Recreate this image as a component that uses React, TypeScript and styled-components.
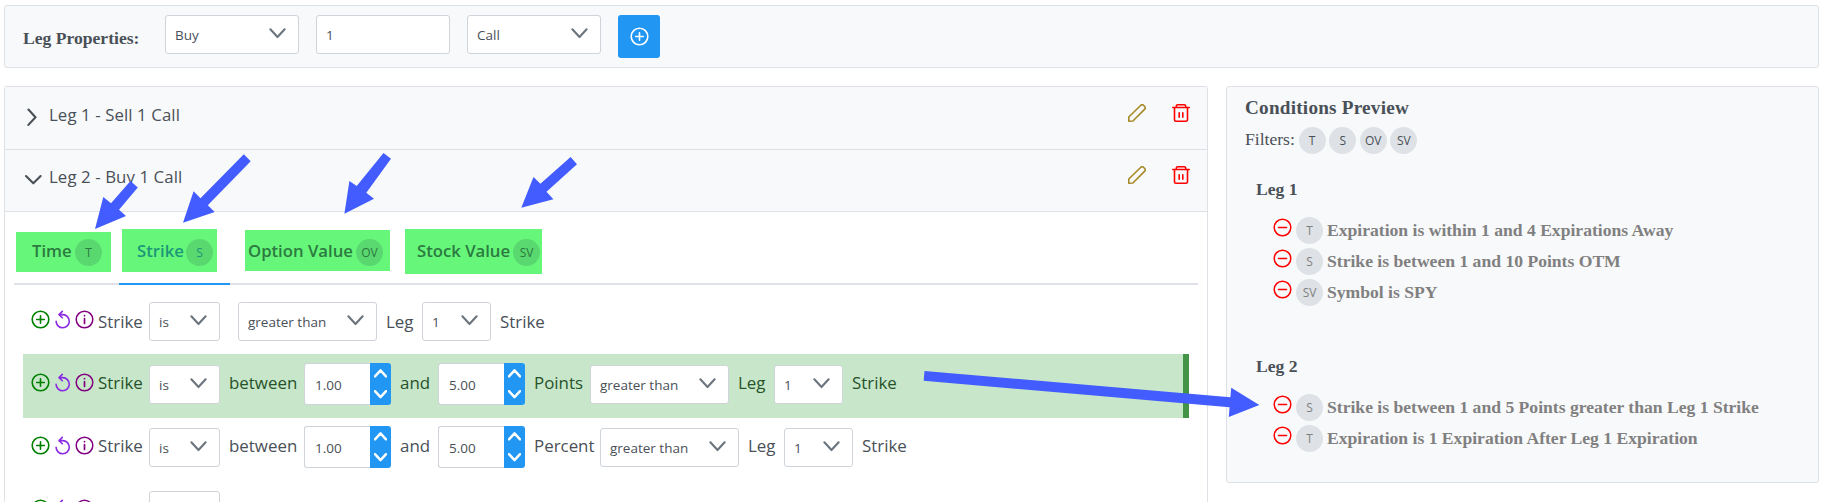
import React from 'react';
import styled, { createGlobalStyle, css } from 'styled-components';

const sans = "'Open Sans', 'Noto Sans', sans-serif";
const serif = "'Liberation Serif', serif";

const GlobalStyle = createGlobalStyle`
  *, *::before, *::after { box-sizing: border-box; }
  html, body { margin: 0; height: 502px; overflow: hidden; }
  body { background: #fff; color: #495057; font-family: ${sans}; }
`;

const Page = styled.div`
  position: relative;
  height: 502px;
  overflow: hidden;
  padding: 5px 19px 0 4px;
  display: flex;
  flex-direction: column;
  gap: 18px;
`;

const panel = css`
  background: #f8f9fa;
  border: 1px solid #dee2e6;
  border-radius: 3px;
`;

const Toolbar = styled.section`
  ${panel}
  flex: none;
  height: 63px;
  display: flex;
  align-items: flex-start;
  gap: 17px;
  padding: 9px 18px;
`;

const ToolbarTitle = styled.strong`
  width: 125px;
  padding-top: 13px;
  font: 700 17.6px/20px ${serif};
  white-space: nowrap;
`;

const Field = styled.div<{ $w: number; $drop?: number }>`
  flex: none;
  width: ${p => p.$w}px;
  height: 39px;
  margin-top: ${p => p.$drop ?? 0}px;
  padding: 0 12px 0 9px;
  display: flex;
  align-items: center;
  justify-content: space-between;
  background: #fff;
  border: 1px solid #ced4da;
  border-radius: 3px;
  color: #495057;
  font-size: 13.5px;
  white-space: nowrap;
`;

const AddButton = styled.button`
  width: 42px;
  height: 43px;
  padding: 0;
  border: 0;
  border-radius: 3px;
  background: #2196f3;
  color: #fff;
  display: grid;
  place-items: center;
`;

const Columns = styled.main`
  display: flex;
  align-items: flex-start;
  gap: 18px;
`;

const Accordion = styled.section`
  width: 1204px;
  height: 430px;
  border: 1px solid #dee2e6;
  border-bottom: 0;
  border-radius: 3px 3px 0 0;
`;

const LegHeader = styled.header<{ $h: number }>`
  height: ${p => p.$h}px;
  padding: ${p => p.$h - 46}px 17px 0 18px;
  display: flex;
  align-items: flex-start;
  background: #f8f9fa;
  border-bottom: 1px solid #dee2e6;
`;

const ToggleSlot = styled.span`
  width: 21px;
  flex: none;
  margin: 4px 5px 0 0;
  height: 18px;
  display: flex;
  align-items: center;
  padding-left: 2px;
`;

const LegTitle = styled.h3`
  flex: 1;
  margin: 0;
  font-size: 16.8px;
  line-height: 22px;
  font-weight: 500;
  letter-spacing: 0.1px;
`;

const Actions = styled.div`
  display: flex;
  gap: 26px;
`;

const Tabs = styled.nav`
  margin: 0 9px;
  height: 73px;
  display: flex;
  border-bottom: 2px solid #dee2e6;
`;

const Tab = styled.div<{ $w: number; $active?: boolean }>`
  width: ${p => p.$w}px;
  height: 73px;
  border-bottom: 2px solid ${p => (p.$active ? '#2196f3' : 'transparent')};
  color: ${p => (p.$active ? '#1c9678' : '#2c7a40')};
`;

const Highlight = styled.div<{ $x: number; $top: number; $w: number; $h: number; $pad: number }>`
  width: ${p => p.$w}px;
  height: ${p => p.$h}px;
  margin: ${p => p.$top}px 0 0 ${p => p.$x}px;
  padding: ${p => 27 - p.$top}px 0 0 ${p => p.$pad}px;
  display: flex;
  align-items: flex-start;
  gap: 4px;
  background: #66f67a;
  white-space: nowrap;
`;

const TabLabel = styled.span<{ $w: number }>`
  width: ${p => p.$w}px;
  font-size: 16.7px;
  font-weight: 600;
  line-height: 24px;
`;

const Badge = styled.span<{ $tone?: 'green' | 'muted' }>`
  flex: none;
  width: 27px;
  height: 27px;
  border-radius: 50%;
  display: grid;
  place-items: center;
  padding-top: 1px;
  font: 400 12px/24px ${sans};
  background: ${p => (p.$tone === 'green' ? '#5ad870' : '#dee2e6')};
  color: ${p => (p.$tone === 'green' ? 'inherit' : p.$tone === 'muted' ? '#808080' : '#495057')};
`;

const Rules = styled.div`
  padding: 6px 18px 0;
`;

const Word = styled.span<{ $w: number }>`
  flex: none;
  width: ${p => p.$w}px;
  margin-top: 8px;
  font-size: 16.9px;
  line-height: 24px;
  white-space: nowrap;
`;

const RuleRow = styled.div<{ $selected?: boolean; $low?: boolean }>`
  height: 63px;
  padding: 9px 0 0 8px;
  display: flex;
  align-items: flex-start;
  gap: 9px;
  color: ${p => (p.$selected ? '#26532b' : '#495057')};
  ${p =>
    p.$low &&
    css`
      ${Word} { margin-top: 10px; }
    `}
  ${p =>
    p.$selected &&
    css`
      height: 64px;
      margin-bottom: -1px;
      background: #c8e6c9;
      border-right: 6px solid #439446;
    `}
`;

const RuleIcons = styled.span`
  width: 58px;
  margin-top: 10px;
  display: flex;
  gap: 4px;
`;

const Spinner = styled.div`
  flex: none;
  width: 87px;
  height: 42px;
  display: flex;
`;

const SpinnerValue = styled.span`
  flex: 1;
  display: flex;
  align-items: center;
  padding-left: 10px;
  padding-top: 2px;
  background: #fff;
  border: 1px solid #ced4da;
  border-right: 0;
  border-radius: 3px 0 0 3px;
  color: #495057;
  font-size: 13.5px;
`;

const SpinnerButtons = styled.span`
  width: 21px;
  display: flex;
  flex-direction: column;
  align-items: center;
  justify-content: space-around;
  background: #2196f3;
  border-radius: 0 3px 3px 0;
  color: #fff;
`;

const Preview = styled.aside`
  ${panel}
  width: 593px;
  height: 397px;
  padding: 10px 18px;
  font: 17.6px/20px ${serif};
`;

const PreviewTitle = styled.h2`
  margin: 0;
  font: 700 19.2px/22px ${serif};
  letter-spacing: 0.22px;
`;

const Filters = styled.div`
  height: 27px;
  margin-top: 8px;
  display: flex;
  gap: 3.6px;
`;

const FiltersLabel = styled.span`
  width: 50px;
  padding-top: 2px;
`;

const LegName = styled.h4<{ $gap: number }>`
  margin: ${p => p.$gap}px 0 0 11px;
  font: 700 17.6px/20px ${serif};
`;

const ConditionList = styled.ul`
  list-style: none;
  margin: 18px 0 0;
  padding: 0 0 0 28px;
`;

const Condition = styled.li`
  height: 31px;
  display: flex;
  color: #808080;
  font-weight: 700;
  white-space: nowrap;
`;

const RemoveSlot = styled.span`
  width: 23px;
  flex: none;
  padding-top: 1px;
`;

const ConditionText = styled.span`
  margin: 3px 0 0 4px;
`;

const Annotations = styled.svg`
  position: absolute;
  left: 0;
  top: 0;
  fill: #425cff;
  pointer-events: none;
`;

const Svg = styled.svg`
  display: block;
  flex: none;
  fill: none;
  stroke: currentColor;
  stroke-linecap: round;
  stroke-linejoin: round;
`;

const Chevron = ({ w = 17, up = false, thick = 2 }: { w?: number; up?: boolean; thick?: number }) => (
  <Svg width={w} height={w / 2 + 2} viewBox="0 0 16 10" strokeWidth={thick}>
    <path d={up ? 'M1.200 8.800 8 1.400l6.800 7.400' : 'M1.200 1.200 8 8.600l6.800-7.400'} />
  </Svg>
);

const ChevronRight = () => (
  <Svg width="18" height="18" viewBox="0 0 18 18" strokeWidth="2.1">
    <path d="M3.400 1.500 10.500 9.200 3.400 16.900" />
  </Svg>
);

const ChevronDown = () => (
  <Svg width="18" height="18" viewBox="0 0 18 18" strokeWidth="2.1">
    <path d="M1 6l7.300 7.300L15.600 6" />
  </Svg>
);

const PlusCircle = ({ color }: { color?: string }) => (
  <Svg width="19" height="19" viewBox="0 0 19 19" strokeWidth="1.6" color={color}>
    <circle cx="9.500" cy="9.500" r="8.300" />
    <path d="M9.500 5.700v7.600M5.700 9.500h7.600" />
  </Svg>
);

const MinusCircle = () => (
  <Svg width="19" height="19" viewBox="0 0 19 19" strokeWidth="1.5" color="#ff0000">
    <circle cx="9.500" cy="9.500" r="8.300" />
    <path d="M5.500 9.500h8" />
  </Svg>
);

const Undo = () => (
  <Svg width="17" height="19" viewBox="0 0 17 19" strokeWidth="1.6" color="#8a2be2">
    <path d="M5.600 4.600H8.800a6.600 6.600 0 1 1-6.700 6.600M8.300 1.400 5 4.600l3.300 3.200" />
  </Svg>
);

const Info = () => (
  <Svg width="19" height="19" viewBox="0 0 19 19" strokeWidth="1.500" color="#800080">
    <circle cx="9.500" cy="9.500" r="8.300" />
    <path d="M9.500 8.700v4.800M9.500 5.600v.1" strokeWidth="1.700" />
  </Svg>
);

const Pencil = () => (
  <Svg width="18" height="18" viewBox="0 0 18 18" strokeWidth="1.6" color="#a68a25">
    <path d="M.8 17.200V13L12.600 1.500a2.200 2.200 0 0 1 3.100 0l.8.8a2.200 2.200 0 0 1 0 3.100L4.900 17z" />
  </Svg>
);

const Trash = () => (
  <Svg width="18" height="18" viewBox="0 0 18 18" strokeWidth="1.600" color="#ff0000">
    <path d="M.8 3.500h16.400M4.300 3.500V2A1.300 1.300 0 0 1 5.600.8h6.800A1.300 1.300 0 0 1 13.700 2v1.500M2.500 3.500v12.300a1.400 1.400 0 0 0 1.400 1.400h10.200a1.400 1.400 0 0 0 1.400-1.400V3.500M7.200 8.700v4.600M10.800 8.700v4.600" />
  </Svg>
);

const ChevronTint = styled.span`
  color: #6c757d;
  margin-bottom: 2px;
`;

const Select = ({ w, drop, children }: { w: number; drop?: number; children?: React.ReactNode }) => (
  <Field $w={w} $drop={drop}>
    <span>{children}</span>
    <ChevronTint><Chevron /></ChevronTint>
  </Field>
);

const NumberInput = ({ value }: { value: string }) => (
  <Spinner>
    <SpinnerValue>{value}</SpinnerValue>
    <SpinnerButtons>
      <Chevron w={13} up thick={3} />
      <Chevron w={13} thick={3} />
    </SpinnerButtons>
  </Spinner>
);

const LegBar = ({ title, open, h }: { title: string; open?: boolean; h: number }) => (
  <LegHeader $h={h}>
    <ToggleSlot>{open ? <ChevronDown /> : <ChevronRight />}</ToggleSlot>
    <LegTitle>{title}</LegTitle>
    <Actions>
      <Pencil />
      <Trash />
    </Actions>
  </LegHeader>
);

const RuleTools = () => (
  <RuleIcons>
    <PlusCircle color="#008000" />
    <Undo />
    <Info />
  </RuleIcons>
);

const RuleStart = () => (
  <>
    <RuleTools />
    <Word $w={42}>Strike</Word>
    <Select w={71} drop={2}>is</Select>
  </>
);

const LegReference = () => (
  <>
    <Select w={139} drop={2}>greater than</Select>
    <Word $w={27}>Leg</Word>
    <Select w={69} drop={2}>1</Select>
    <Word $w={44}>Strike</Word>
  </>
);

const RangeRule = ({ unit, unitWidth, selected }: { unit: string; unitWidth: number; selected?: boolean }) => (
  <RuleRow $selected={selected}>
    <RuleStart />
    <Word $w={66}>between</Word>
    <NumberInput value="1.00" />
    <Word $w={29}>and</Word>
    <NumberInput value="5.00" />
    <Word $w={unitWidth}>{unit}</Word>
    <LegReference />
  </RuleRow>
);

const filters = ['T', 'S', 'OV', 'SV'];

const previews = [
  {
    name: 'Leg 1',
    gap: 25,
    items: [
      ['T', 'Expiration is within 1 and 4 Expirations Away'],
      ['S', 'Strike is between 1 and 10 Points OTM'],
      ['SV', 'Symbol is SPY'],
    ],
  },
  {
    name: 'Leg 2',
    gap: 46,
    items: [
      ['S', 'Strike is between 1 and 5 Points greater than Leg 1 Strike'],
      ['T', 'Expiration is 1 Expiration After Leg 1 Expiration'],
    ],
  },
];

const tabs = [
  { label: 'Time', tag: 'T', w: 105, box: { $x: 2, $top: 20, $w: 95, $h: 40, $pad: 16 }, text: 39 },
  { label: 'Strike', tag: 'S', w: 111, active: true, box: { $x: 3, $top: 17, $w: 95, $h: 43, $pad: 15 }, text: 45 },
  { label: 'Option Value', tag: 'OV', w: 169, box: { $x: 15, $top: 18, $w: 145, $h: 41, $pad: 3 }, text: 104 },
  { label: 'Stock Value', tag: 'SV', w: 150, box: { $x: 6, $top: 17, $w: 137, $h: 45, $pad: 12 }, text: 92 },
];

export default function App() {
  return (
    <Page>
      <GlobalStyle />
      <Toolbar>
        <ToolbarTitle>Leg Properties:</ToolbarTitle>
        <Select w={134}>Buy</Select>
        <Field $w={134}>1</Field>
        <Select w={134}>Call</Select>
        <AddButton><PlusCircle /></AddButton>
      </Toolbar>

      <Columns>
        <Accordion>
          <LegBar title="Leg 1 - Sell 1 Call" h={63} />
          <LegBar title="Leg 2 - Buy 1 Call" h={62} open />
          <Tabs>
            {tabs.map(t => (
              <Tab key={t.tag} $w={t.w} $active={t.active}>
                <Highlight {...t.box}>
                  <TabLabel $w={t.text}>{t.label}</TabLabel>
                  <Badge $tone="green">{t.tag}</Badge>
                </Highlight>
              </Tab>
            ))}
          </Tabs>
          <Rules>
            <RuleRow $low>
              <RuleStart />
              <span />
              <LegReference />
            </RuleRow>
            <RangeRule unit="Points" unitWidth={47} selected />
            <RangeRule unit="Percent" unitWidth={57} />
            <RuleRow>
              <RuleTools />
              <Word $w={42} />
              <Select w={71} drop={2} />
            </RuleRow>
          </Rules>
        </Accordion>

        <Preview>
          <PreviewTitle>Conditions Preview</PreviewTitle>
          <Filters>
            <FiltersLabel>Filters:</FiltersLabel>
            {filters.map(f => <Badge key={f}>{f}</Badge>)}
          </Filters>
          {previews.map(leg => (
            <React.Fragment key={leg.name}>
              <LegName $gap={leg.gap}>{leg.name}</LegName>
              <ConditionList>
                {leg.items.map(([tag, text]) => (
                  <Condition key={text}>
                    <RemoveSlot><MinusCircle /></RemoveSlot>
                    <Badge $tone="muted">{tag}</Badge>
                    <ConditionText>{text}</ConditionText>
                  </Condition>
                ))}
              </ConditionList>
            </React.Fragment>
          ))}
        </Preview>
      </Columns>

      <Annotations width="1838" height="502" viewBox="0 0 1838 502">
        <polygon points="95,229 103.3,197 111,203.300 130.500,181 137.800,187.500 119,209.700 126,216" />
        <polygon points="183,222.700 193.600,191.300 200.500,198.300 243.800,154.300 250.700,161.300 207.800,205.300 214.700,212" />
        <polygon points="344.400,213.700 349.400,181 356.700,186 383.500,153 391,158.700 366.300,192.700 374,198.700" />
        <polygon points="521.300,207.700 533.500,177 540.400,183.700 570.600,157 577,164.300 546.500,191.700 553.400,199.300" />
        <polygon points="1259.300,405 1231.200,387.700 1230.400,397.300 924.500,371 923.700,380.700 1229.600,407.300 1228.800,417" />
      </Annotations>
    </Page>
  );
}
